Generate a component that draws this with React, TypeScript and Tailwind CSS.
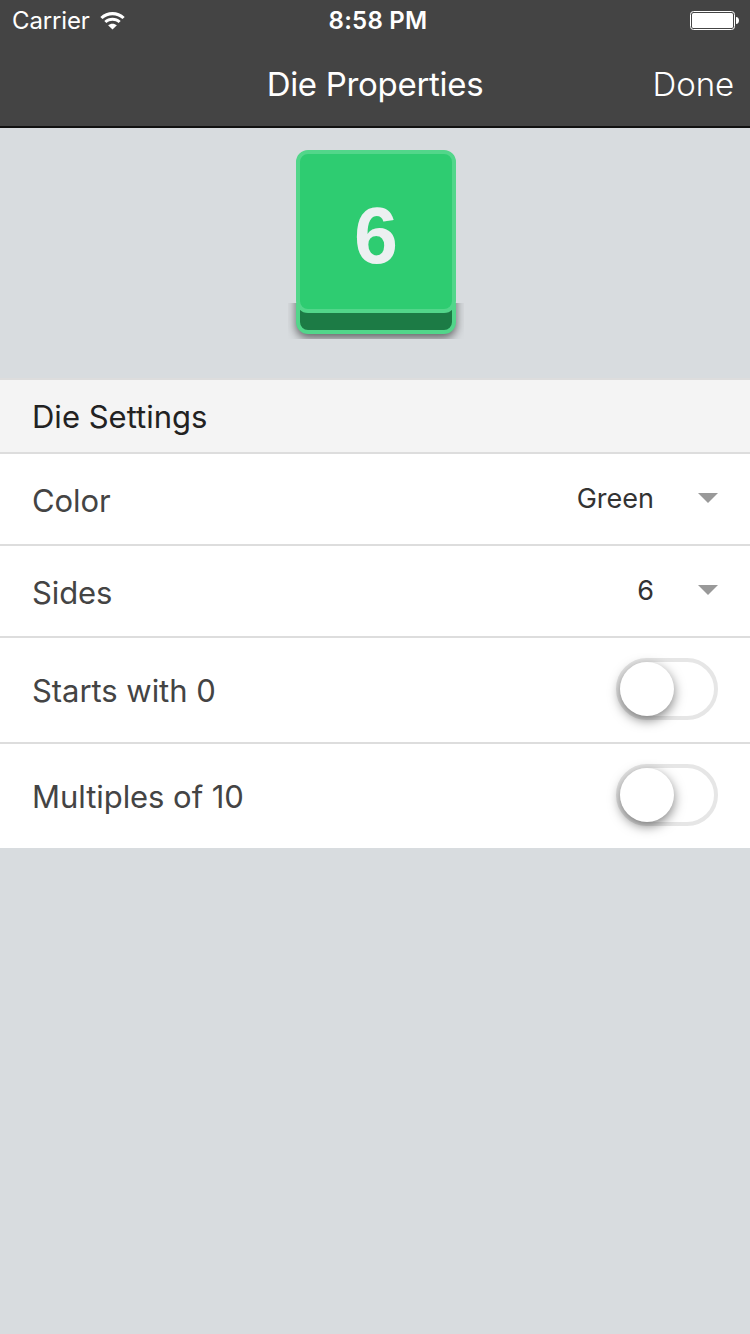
import React from "react";

function Wifi() {
  return (
    <svg className="ml-[10px] h-[18px] w-[25px]" viewBox="0 0 25 18" fill="#fff">
      <path d="M0.3 4.9C7 -1.6 18 -1.6 24.7 4.9L22.5 7.1C17 1.9 8 1.9 2.5 7.1Z" />
      <path d="M4.3 9C8.9 4.7 16.1 4.7 20.7 9L18.6 11.1C15.1 8 9.9 8 6.4 11.1Z" />
      <path d="M8.1 13.2C10.6 11.1 14.4 11.1 16.9 13.2L12.5 17.6Z" />
    </svg>
  );
}

function Battery() {
  return (
    <svg className="-mr-px h-[19px] w-[49px]" viewBox="0 0 49 19">
      <rect x="0.5" y="0.5" width="44" height="18" rx="3" fill="none" stroke="#fff" />
      <rect x="2" y="2" width="41" height="15" rx="1.5" fill="#fff" />
      <path d="M46 6C50 6 50 13 46 13Z" fill="#fff" />
    </svg>
  );
}

function SelectRow({ label, value }: { label: string; value: string }) {
  return (
    <div className="flex h-[92px] items-center border-b-2 border-[#dddddd] px-8 pb-0.5">
      <span className="grow pt-1.5 text-[31px] tracking-[-0.1px] text-[#444]">{label}</span>
      <span className="pt-0.5 text-[27px] text-[#333]">{value}</span>
      <span className="ml-11 border-x-[10px] border-t-[10px] border-x-transparent border-t-[#999]" />
    </div>
  );
}

function ToggleRow({ label, last }: { label: string; last?: boolean }) {
  return (
    <div className={last ? "flex h-[104px] items-center px-8" : "flex h-[106px] items-center border-b-2 border-[#dddddd] px-8"}>
      <span className="grow pt-0.5 text-[31px] tracking-[-0.05px] text-[#444]">{label}</span>
      <span className="mb-0.5 flex h-[62px] w-[102px] items-center rounded-full border-4 border-[#e6e6e6] bg-white">
        <span className="h-[54px] w-[54px] rounded-full bg-white shadow-[0_4px_12px_rgba(0,0,0,0.5)]" />
      </span>
    </div>
  );
}

function Die({ value }: { value: string }) {
  return (
    <div className="ml-0.5 grid h-[189px] w-[176px] justify-items-center">
      <div className="col-start-1 row-start-1 flex h-[36px] w-[176px] items-end justify-center self-end overflow-hidden pb-[5px]">
        <div className="h-[60px] w-[160px] shrink-0 rounded-xl border-4 border-[#52d68a] bg-[#1c7b45] shadow-[0_4px_10px_rgba(0,0,0,0.55)]" />
      </div>
      <div className="col-start-1 row-start-1 flex h-[163px] w-[160px] items-center justify-center rounded-xl border-4 border-[#52d68a] bg-[#2ecc71] pt-[9px] font-['Liberation_Sans',sans-serif] text-[79px] font-bold text-[#ecf0f1]">
        {value}
      </div>
    </div>
  );
}

export default function App() {
  return (
    <div className="flex h-[1334px] w-[750px] flex-col bg-[#d8dcdf] font-['Inter','Liberation_Sans',sans-serif]">
      <header className="h-[128px] border-b-2 border-[#111] bg-[#444] text-white">
        <div className="flex h-[41px] items-center px-3 text-[24px]">
          <div className="flex flex-1 items-center tracking-[-0.15px]">Carrier<Wifi /></div>
          <span className="pl-[6px] font-semibold tracking-[0.25px]">8:58 PM</span>
          <div className="flex flex-1 justify-end"><Battery /></div>
        </div>
        <div className="grid h-[85px] grid-cols-3 items-center px-4 pt-[3px]">
          <h1 className="col-start-2 text-center text-[33px] tracking-[-0.3px]">Die Properties</h1>
          <span className="text-right text-[33px] font-light tracking-[-0.1px]">Done</span>
        </div>
      </header>
      <section className="flex h-[250px] justify-center pt-[22px]">
        <Die value="6" />
      </section>
      <section className="bg-white">
        <h2 className="flex h-[76px] items-center border-y-2 border-[#ddd] bg-[#f4f4f4] px-8 pt-[3px] text-[31px] text-[#222]">Die Settings</h2>
        <SelectRow label="Color" value="Green" />
        <SelectRow label="Sides" value="6" />
        <ToggleRow label="Starts with 0" />
        <ToggleRow label="Multiples of 10" last />
      </section>
    </div>
  );
}
